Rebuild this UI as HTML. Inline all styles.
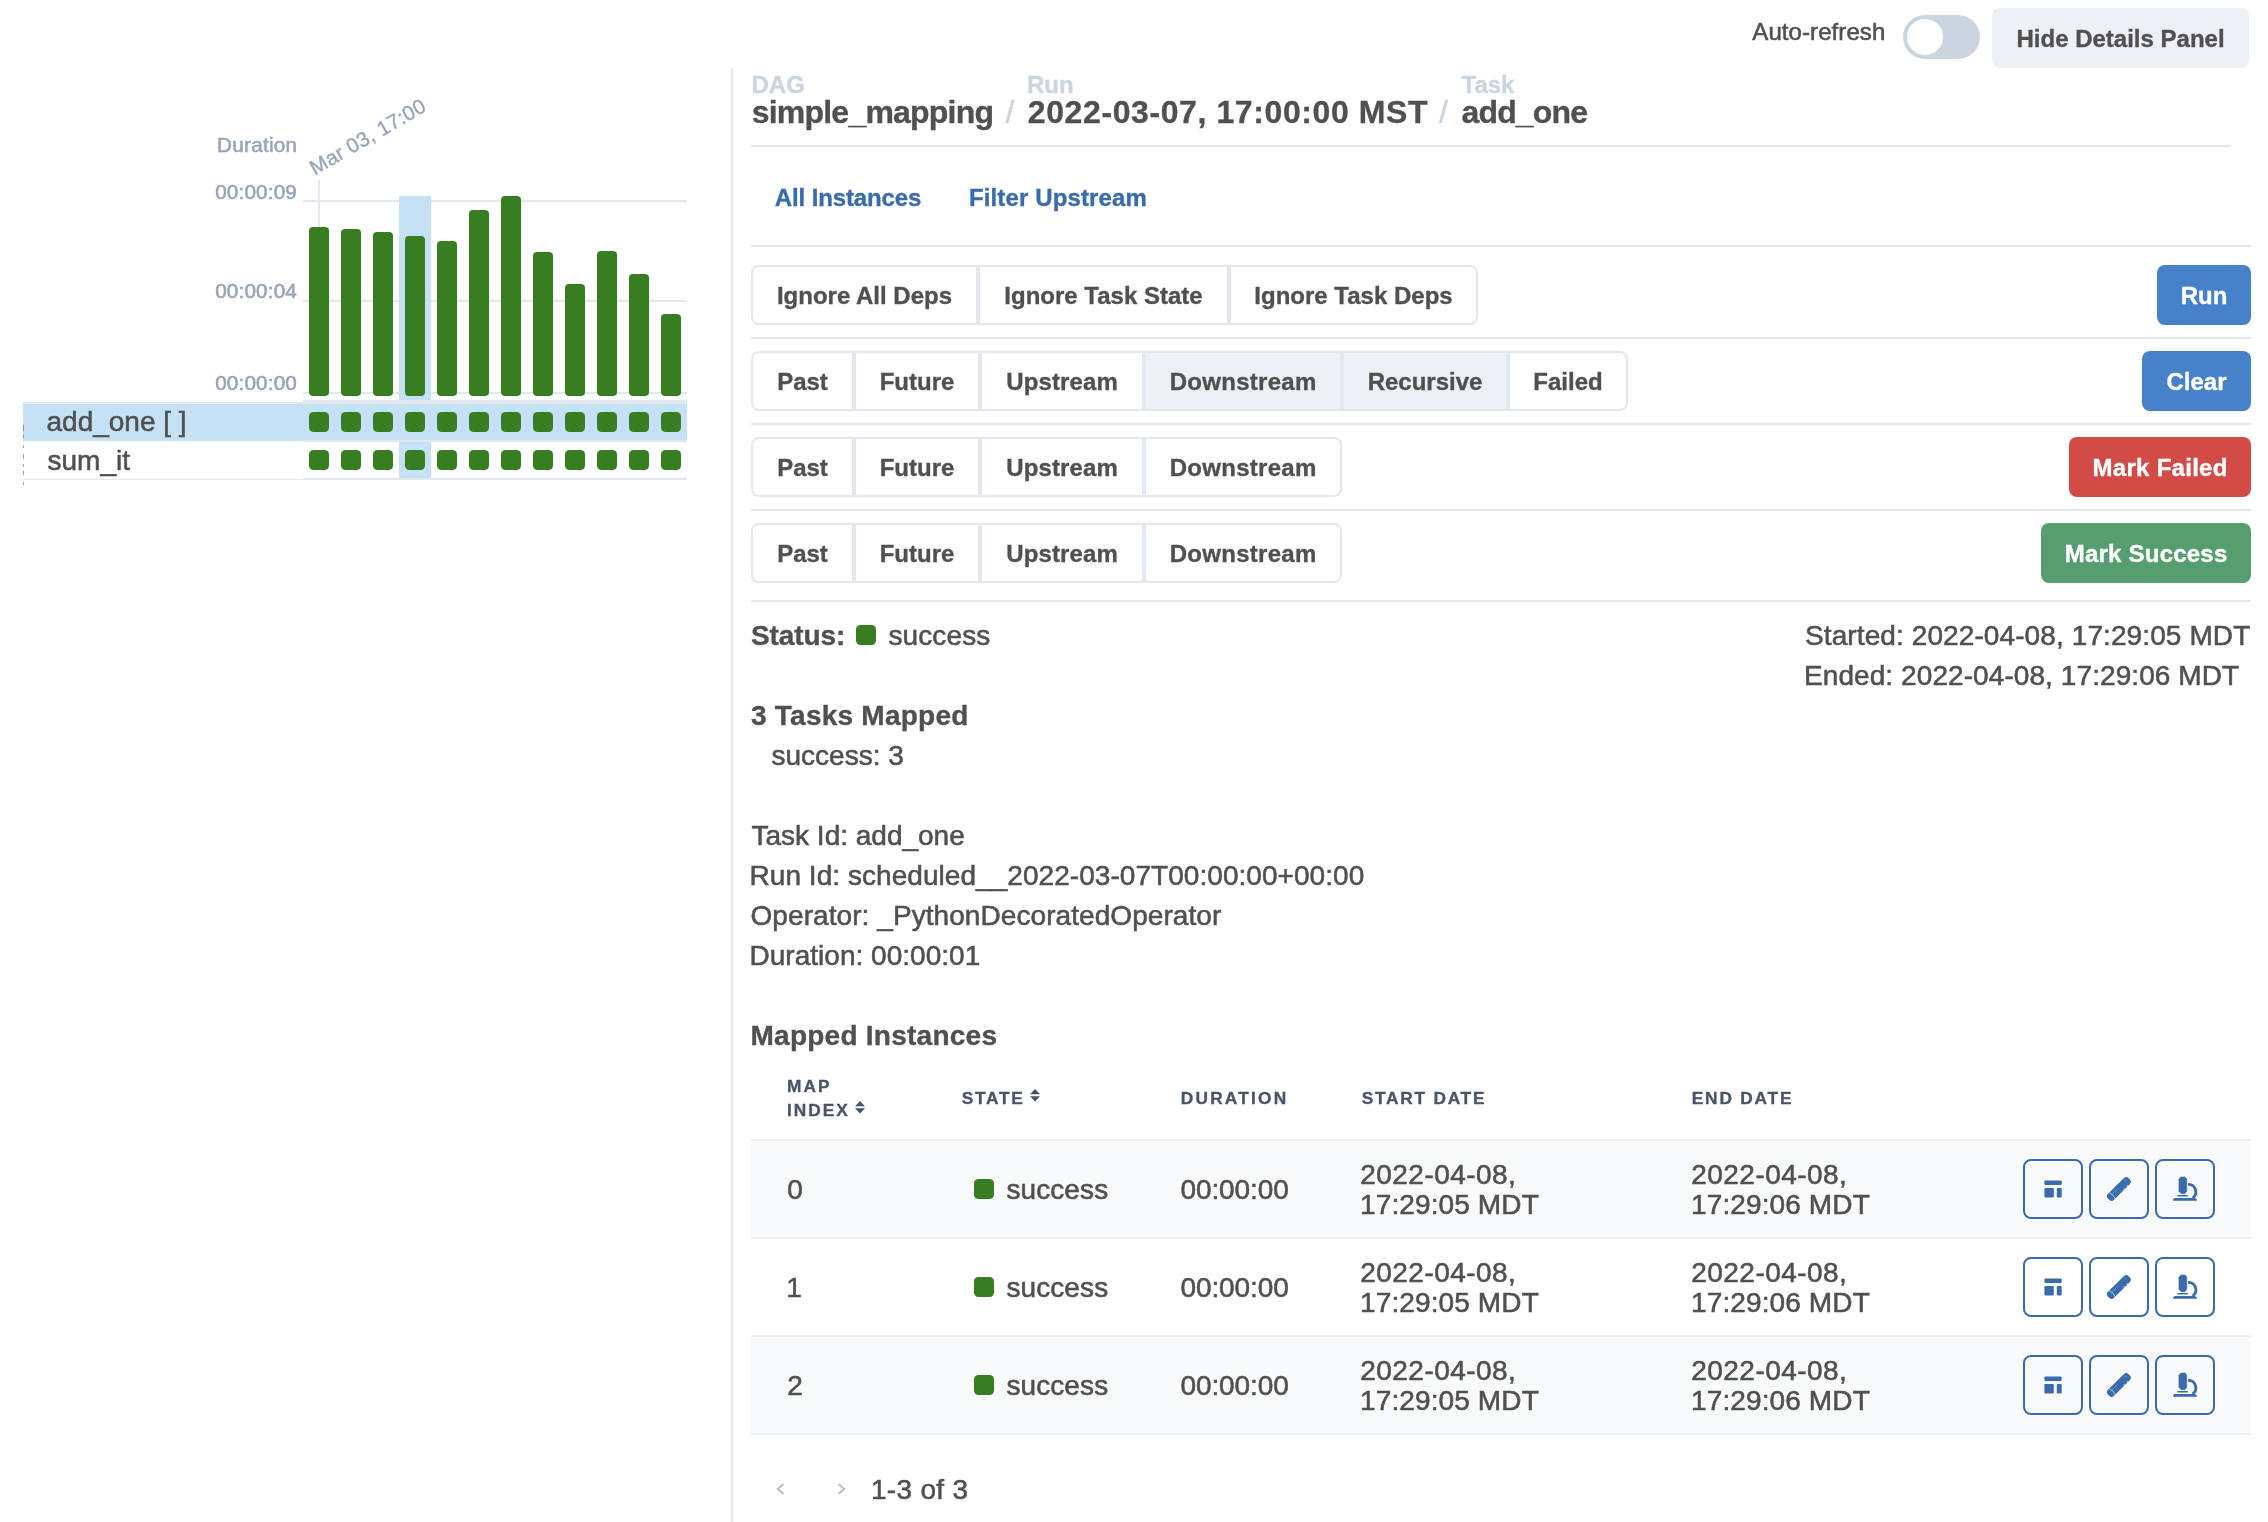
<!DOCTYPE html>
<html><head><meta charset="utf-8"><title>Airflow grid</title>
<style>
html,body{margin:0;padding:0;background:#fff}
body{width:2268px;height:1522px;position:relative;overflow:hidden;font-family:"Liberation Sans",sans-serif;color:#51504f}
#root{position:absolute;left:0;top:0;width:2268px;height:1522px;will-change:transform;transform:translateZ(0)}
.t{position:absolute;white-space:nowrap;-webkit-text-stroke:0.35px}
.r{position:absolute}
.b{color:#51504f}
</style></head><body><div id="root">
<div class="t" style="top:16px;font-size:24px;line-height:31px;color:#51504f;-webkit-text-stroke:0.55px;letter-spacing:0.08px;left:1752.3px;">Auto-refresh</div>
<div class="r" style="left:1903px;top:15px;width:77px;height:44px;background:#cbd5e0;border-radius:22px"></div>
<div class="r" style="left:1907px;top:19px;width:36px;height:36px;background:#fff;border-radius:50%"></div>
<div class="r" style="left:1992px;top:8px;width:257px;height:60px;background:#edf1f6;border-radius:8px"></div>
<div class="t" style="top:23px;font-size:24px;line-height:31px;color:#51504f;font-weight:700;left:2016.5px;">Hide Details Panel</div>
<div class="t" style="top:131px;font-size:20.7px;line-height:27px;color:#98a5b9;-webkit-text-stroke:0.55px;letter-spacing:0.25px;right:1970.7px;text-align:right;">Duration</div>
<div class="t" style="top:178px;font-size:20.7px;line-height:27px;color:#98a5b9;-webkit-text-stroke:0.55px;letter-spacing:0.16px;right:1971px;text-align:right;">00:00:09</div>
<div class="t" style="top:277px;font-size:20.7px;line-height:27px;color:#98a5b9;-webkit-text-stroke:0.55px;letter-spacing:0.16px;right:1971px;text-align:right;">00:00:04</div>
<div class="t" style="top:369px;font-size:20.7px;line-height:27px;color:#98a5b9;-webkit-text-stroke:0.55px;letter-spacing:0.16px;right:1971px;text-align:right;">00:00:00</div>
<div class="t" style="left:314.4px;top:173.7px;font-size:20.7px;letter-spacing:0.2px;line-height:0;color:#98a5b9;transform-origin:0 0;transform:rotate(-30deg)"><span style="position:absolute;left:0;bottom:0;line-height:1;transform:translateY(5.60px)">Mar 03, 17:00</span></div>
<div class="r" style="left:303px;top:200px;width:384px;height:2px;background:#e3e7ef;"></div>
<div class="r" style="left:303px;top:300px;width:384px;height:2px;background:#e3e7ef;"></div>
<div class="r" style="left:303px;top:392px;width:384px;height:2px;background:#e3e7ef;"></div>
<div class="r" style="left:318px;top:180px;width:2px;height:48px;background:#e3e7ef;"></div>
<div class="r" style="left:399px;top:196px;width:32px;height:204px;background:#c4e1f6;"></div>
<div class="r" style="left:399px;top:442px;width:32px;height:36px;background:#c4e1f6;"></div>
<div class="r" style="left:309px;top:227px;width:20px;height:169px;background:#377d22;border-radius:4px"></div>
<div class="r" style="left:341px;top:229px;width:20px;height:167px;background:#377d22;border-radius:4px"></div>
<div class="r" style="left:373px;top:232px;width:20px;height:164px;background:#377d22;border-radius:4px"></div>
<div class="r" style="left:405px;top:236px;width:20px;height:160px;background:#377d22;border-radius:4px"></div>
<div class="r" style="left:437px;top:241px;width:20px;height:155px;background:#377d22;border-radius:4px"></div>
<div class="r" style="left:469px;top:210px;width:20px;height:186px;background:#377d22;border-radius:4px"></div>
<div class="r" style="left:501px;top:196px;width:20px;height:200px;background:#377d22;border-radius:4px"></div>
<div class="r" style="left:533px;top:252px;width:20px;height:144px;background:#377d22;border-radius:4px"></div>
<div class="r" style="left:565px;top:284px;width:20px;height:112px;background:#377d22;border-radius:4px"></div>
<div class="r" style="left:597px;top:251px;width:20px;height:145px;background:#377d22;border-radius:4px"></div>
<div class="r" style="left:629px;top:274px;width:20px;height:122px;background:#377d22;border-radius:4px"></div>
<div class="r" style="left:661px;top:314px;width:20px;height:82px;background:#377d22;border-radius:4px"></div>
<div class="r" style="left:303px;top:400px;width:384px;height:4px;background:#e3e7ef;"></div>
<div class="r" style="left:23px;top:402px;width:280px;height:2px;background:#e3e7ef;"></div>
<div class="r" style="left:23px;top:404px;width:664px;height:36px;background:#c4e1f6;"></div>
<div class="r" style="left:23px;top:440px;width:280px;height:1px;background:#c4e1f6;"></div>
<div class="r" style="left:303px;top:440px;width:384px;height:2px;background:#e3e7ef;"></div>
<div class="r" style="left:303px;top:478px;width:384px;height:2px;background:#e3e7ef;"></div>
<div class="r" style="left:23px;top:479px;width:280px;height:1px;background:#e3e7ef;"></div>
<div class="r" style="left:399px;top:442px;width:32px;height:36px;background:#c4e1f6;"></div>
<div class="r" style="left:309px;top:412px;width:20px;height:20px;background:#377d22;border-radius:4.5px"></div>
<div class="r" style="left:309px;top:450px;width:20px;height:20px;background:#377d22;border-radius:4.5px"></div>
<div class="r" style="left:341px;top:412px;width:20px;height:20px;background:#377d22;border-radius:4.5px"></div>
<div class="r" style="left:341px;top:450px;width:20px;height:20px;background:#377d22;border-radius:4.5px"></div>
<div class="r" style="left:373px;top:412px;width:20px;height:20px;background:#377d22;border-radius:4.5px"></div>
<div class="r" style="left:373px;top:450px;width:20px;height:20px;background:#377d22;border-radius:4.5px"></div>
<div class="r" style="left:405px;top:412px;width:20px;height:20px;background:#377d22;border-radius:4.5px"></div>
<div class="r" style="left:405px;top:450px;width:20px;height:20px;background:#377d22;border-radius:4.5px"></div>
<div class="r" style="left:437px;top:412px;width:20px;height:20px;background:#377d22;border-radius:4.5px"></div>
<div class="r" style="left:437px;top:450px;width:20px;height:20px;background:#377d22;border-radius:4.5px"></div>
<div class="r" style="left:469px;top:412px;width:20px;height:20px;background:#377d22;border-radius:4.5px"></div>
<div class="r" style="left:469px;top:450px;width:20px;height:20px;background:#377d22;border-radius:4.5px"></div>
<div class="r" style="left:501px;top:412px;width:20px;height:20px;background:#377d22;border-radius:4.5px"></div>
<div class="r" style="left:501px;top:450px;width:20px;height:20px;background:#377d22;border-radius:4.5px"></div>
<div class="r" style="left:533px;top:412px;width:20px;height:20px;background:#377d22;border-radius:4.5px"></div>
<div class="r" style="left:533px;top:450px;width:20px;height:20px;background:#377d22;border-radius:4.5px"></div>
<div class="r" style="left:565px;top:412px;width:20px;height:20px;background:#377d22;border-radius:4.5px"></div>
<div class="r" style="left:565px;top:450px;width:20px;height:20px;background:#377d22;border-radius:4.5px"></div>
<div class="r" style="left:597px;top:412px;width:20px;height:20px;background:#377d22;border-radius:4.5px"></div>
<div class="r" style="left:597px;top:450px;width:20px;height:20px;background:#377d22;border-radius:4.5px"></div>
<div class="r" style="left:629px;top:412px;width:20px;height:20px;background:#377d22;border-radius:4.5px"></div>
<div class="r" style="left:629px;top:450px;width:20px;height:20px;background:#377d22;border-radius:4.5px"></div>
<div class="r" style="left:661px;top:412px;width:20px;height:20px;background:#377d22;border-radius:4.5px"></div>
<div class="r" style="left:661px;top:450px;width:20px;height:20px;background:#377d22;border-radius:4.5px"></div>
<div class="t" style="top:404px;font-size:28px;line-height:35px;color:#51504f;-webkit-text-stroke:0.55px;left:46.5px;">add_one [ ]</div>
<div class="t" style="top:443px;font-size:28px;line-height:35px;color:#51504f;-webkit-text-stroke:0.55px;left:47.5px;">sum_it</div>
<div class="r" style="left:23px;top:425px;width:1px;height:6px;background:rgba(90,90,90,.55);"></div>
<div class="r" style="left:23px;top:435px;width:1px;height:3px;background:rgba(90,90,90,.55);"></div>
<div class="r" style="left:23px;top:445px;width:1px;height:3px;background:rgba(90,90,90,.55);"></div>
<div class="r" style="left:23px;top:454px;width:1px;height:5px;background:rgba(90,90,90,.55);"></div>
<div class="r" style="left:23px;top:464px;width:1px;height:3px;background:rgba(90,90,90,.55);"></div>
<div class="r" style="left:23px;top:471px;width:1px;height:4px;background:rgba(90,90,90,.55);"></div>
<div class="r" style="left:23px;top:482px;width:1px;height:3px;background:rgba(90,90,90,.55);"></div>
<div class="r" style="left:731px;top:68px;width:2px;height:1454px;background:#e3e7ef;"></div>
<div class="t" style="top:69px;font-size:24px;line-height:31px;color:#cbd5e0;font-weight:700;left:751.5px;">DAG</div>
<div class="t" style="top:69px;font-size:24px;line-height:31px;color:#cbd5e0;font-weight:700;left:1027px;">Run</div>
<div class="t" style="top:69px;font-size:24px;line-height:31px;color:#cbd5e0;font-weight:700;left:1461.5px;">Task</div>
<div class="t" style="top:92px;font-size:32px;line-height:40px;color:#51504f;font-weight:700;letter-spacing:-0.78px;left:751.7px;">simple_mapping</div>
<div class="t" style="top:92px;font-size:32px;line-height:40px;color:#cbd5e0;-webkit-text-stroke:0.55px;left:1005.5px;">/</div>
<div class="t" style="top:92px;font-size:32px;line-height:40px;color:#51504f;font-weight:700;letter-spacing:0.6px;left:1027.8px;">2022-03-07, 17:00:00 MST</div>
<div class="t" style="top:92px;font-size:32px;line-height:40px;color:#cbd5e0;-webkit-text-stroke:0.55px;left:1439px;">/</div>
<div class="t" style="top:92px;font-size:32px;line-height:40px;color:#51504f;font-weight:700;letter-spacing:-0.85px;left:1461.5px;">add_one</div>
<div class="r" style="left:751px;top:145px;width:1480px;height:2px;background:#e3e7ef;"></div>
<div class="t" style="top:182px;font-size:24px;line-height:31px;color:#3a6bad;font-weight:700;letter-spacing:-0.12px;left:774.8px;">All Instances</div>
<div class="t" style="top:182px;font-size:24px;line-height:31px;color:#3a6bad;font-weight:700;letter-spacing:0.12px;left:969px;">Filter Upstream</div>
<div class="r" style="left:751px;top:245px;width:1500px;height:2px;background:#e3e7ef;"></div>
<div class="r" style="left:751px;top:337px;width:1500px;height:2px;background:#e3e7ef;"></div>
<div class="r" style="left:751px;top:423px;width:1500px;height:2px;background:#e3e7ef;"></div>
<div class="r" style="left:751px;top:509px;width:1500px;height:2px;background:#e3e7ef;"></div>
<div class="r" style="left:751px;top:600px;width:1500px;height:2px;background:#e3e7ef;"></div>
<div class="r" style="left:751px;top:265px;width:727px;height:60px;border:2px solid #e3e7ef;border-radius:8px;box-sizing:border-box;overflow:hidden">
<div class="r" style="left:223px;top:-2px;width:4px;height:60px;background:#e3e7ef"></div>
<div class="r" style="left:474px;top:-2px;width:4px;height:60px;background:#e3e7ef"></div>
</div>
<div class="t b" style="left:751px;width:227px;top:265px;height:60px;line-height:62px;text-align:center;font-size:24px;font-weight:700">Ignore All Deps</div>
<div class="t b" style="left:978px;width:251px;top:265px;height:60px;line-height:62px;text-align:center;font-size:24px;font-weight:700">Ignore Task State</div>
<div class="t b" style="left:1229px;width:249px;top:265px;height:60px;line-height:62px;text-align:center;font-size:24px;font-weight:700">Ignore Task Deps</div>
<div class="r" style="left:751px;top:351px;width:877px;height:60px;border:2px solid #e3e7ef;border-radius:8px;box-sizing:border-box;overflow:hidden">
<div class="r" style="left:99px;top:-2px;width:4px;height:60px;background:#e3e7ef"></div>
<div class="r" style="left:225px;top:-2px;width:4px;height:60px;background:#e3e7ef"></div>
<div class="r" style="left:391px;top:-2px;width:198px;height:60px;background:#edf1f6"></div>
<div class="r" style="left:389px;top:-2px;width:4px;height:60px;background:#e3e7ef"></div>
<div class="r" style="left:589px;top:-2px;width:166px;height:60px;background:#edf1f6"></div>
<div class="r" style="left:587px;top:-2px;width:4px;height:60px;background:#e3e7ef"></div>
<div class="r" style="left:753px;top:-2px;width:4px;height:60px;background:#e3e7ef"></div>
</div>
<div class="t b" style="left:751px;width:103px;top:351px;height:60px;line-height:62px;text-align:center;font-size:24px;font-weight:700">Past</div>
<div class="t b" style="left:854px;width:126px;top:351px;height:60px;line-height:62px;text-align:center;font-size:24px;font-weight:700">Future</div>
<div class="t b" style="left:980px;width:164px;top:351px;height:60px;line-height:62px;text-align:center;font-size:24px;font-weight:700"><span style="letter-spacing:0.12px;margin-right:-0.12px">Upstream</span></div>
<div class="t b" style="left:1144px;width:198px;top:351px;height:60px;line-height:62px;text-align:center;font-size:24px;font-weight:700"><span style="letter-spacing:0.3px;margin-right:-0.3px">Downstream</span></div>
<div class="t b" style="left:1342px;width:166px;top:351px;height:60px;line-height:62px;text-align:center;font-size:24px;font-weight:700">Recursive</div>
<div class="t b" style="left:1508px;width:120px;top:351px;height:60px;line-height:62px;text-align:center;font-size:24px;font-weight:700">Failed</div>
<div class="r" style="left:751px;top:437px;width:591px;height:60px;border:2px solid #e3e7ef;border-radius:8px;box-sizing:border-box;overflow:hidden">
<div class="r" style="left:99px;top:-2px;width:4px;height:60px;background:#e3e7ef"></div>
<div class="r" style="left:225px;top:-2px;width:4px;height:60px;background:#e3e7ef"></div>
<div class="r" style="left:389px;top:-2px;width:4px;height:60px;background:#e3e7ef"></div>
</div>
<div class="t b" style="left:751px;width:103px;top:437px;height:60px;line-height:62px;text-align:center;font-size:24px;font-weight:700">Past</div>
<div class="t b" style="left:854px;width:126px;top:437px;height:60px;line-height:62px;text-align:center;font-size:24px;font-weight:700">Future</div>
<div class="t b" style="left:980px;width:164px;top:437px;height:60px;line-height:62px;text-align:center;font-size:24px;font-weight:700"><span style="letter-spacing:0.12px;margin-right:-0.12px">Upstream</span></div>
<div class="t b" style="left:1144px;width:198px;top:437px;height:60px;line-height:62px;text-align:center;font-size:24px;font-weight:700"><span style="letter-spacing:0.3px;margin-right:-0.3px">Downstream</span></div>
<div class="r" style="left:751px;top:523px;width:591px;height:60px;border:2px solid #e3e7ef;border-radius:8px;box-sizing:border-box;overflow:hidden">
<div class="r" style="left:99px;top:-2px;width:4px;height:60px;background:#e3e7ef"></div>
<div class="r" style="left:225px;top:-2px;width:4px;height:60px;background:#e3e7ef"></div>
<div class="r" style="left:389px;top:-2px;width:4px;height:60px;background:#e3e7ef"></div>
</div>
<div class="t b" style="left:751px;width:103px;top:523px;height:60px;line-height:62px;text-align:center;font-size:24px;font-weight:700">Past</div>
<div class="t b" style="left:854px;width:126px;top:523px;height:60px;line-height:62px;text-align:center;font-size:24px;font-weight:700">Future</div>
<div class="t b" style="left:980px;width:164px;top:523px;height:60px;line-height:62px;text-align:center;font-size:24px;font-weight:700"><span style="letter-spacing:0.12px;margin-right:-0.12px">Upstream</span></div>
<div class="t b" style="left:1144px;width:198px;top:523px;height:60px;line-height:62px;text-align:center;font-size:24px;font-weight:700"><span style="letter-spacing:0.3px;margin-right:-0.3px">Downstream</span></div>
<div class="t" style="left:2157px;top:265px;width:94px;height:60px;line-height:62px;background:#4681c9;border-radius:8px;color:#fff;text-align:center;font-size:24px;font-weight:700">Run</div>
<div class="t" style="left:2142px;top:351px;width:109px;height:60px;line-height:62px;background:#4681c9;border-radius:8px;color:#fff;text-align:center;font-size:24px;font-weight:700">Clear</div>
<div class="t" style="left:2069px;top:437px;width:182px;height:60px;line-height:62px;background:#d24b47;border-radius:8px;color:#fff;text-align:center;font-size:24px;font-weight:700"><span style="letter-spacing:0.28px;margin-right:-0.28px">Mark Failed</span></div>
<div class="t" style="left:2041px;top:523px;width:210px;height:60px;line-height:62px;background:#579e6f;border-radius:8px;color:#fff;text-align:center;font-size:24px;font-weight:700"><span style="letter-spacing:0.22px;margin-right:-0.22px">Mark Success</span></div>
<div class="t" style="top:618px;font-size:28px;line-height:35px;color:#51504f;font-weight:700;letter-spacing:-0.1px;left:751px;">Status:</div>
<div class="r" style="left:856px;top:625px;width:20px;height:20px;background:#377d22;border-radius:4.5px"></div>
<div class="t" style="top:618px;font-size:28px;line-height:35px;color:#51504f;-webkit-text-stroke:0.55px;letter-spacing:0.1px;left:888.5px;">success</div>
<div class="t" style="top:618px;font-size:28px;line-height:35px;color:#51504f;-webkit-text-stroke:0.55px;letter-spacing:0.1px;left:1805px;">Started: 2022-04-08, 17:29:05 MDT</div>
<div class="t" style="top:658px;font-size:28px;line-height:35px;color:#51504f;-webkit-text-stroke:0.55px;letter-spacing:0.08px;left:1804px;">Ended: 2022-04-08, 17:29:06 MDT</div>
<div class="t" style="top:698px;font-size:28px;line-height:35px;color:#51504f;font-weight:700;letter-spacing:0.24px;left:751px;">3 Tasks Mapped</div>
<div class="t" style="top:738px;font-size:28px;line-height:35px;color:#51504f;-webkit-text-stroke:0.55px;left:771.5px;">success: 3</div>
<div class="t" style="top:818px;font-size:28px;line-height:35px;color:#51504f;-webkit-text-stroke:0.55px;left:751.5px;">Task Id: add_one</div>
<div class="t" style="top:858px;font-size:28px;line-height:35px;color:#51504f;-webkit-text-stroke:0.55px;letter-spacing:0.05px;left:749.5px;">Run Id: scheduled__2022-03-07T00:00:00+00:00</div>
<div class="t" style="top:898px;font-size:28px;line-height:35px;color:#51504f;-webkit-text-stroke:0.55px;letter-spacing:0.07px;left:750.5px;">Operator: _PythonDecoratedOperator</div>
<div class="t" style="top:938px;font-size:28px;line-height:35px;color:#51504f;-webkit-text-stroke:0.55px;letter-spacing:0.02px;left:749.5px;">Duration: 00:00:01</div>
<div class="t" style="top:1018px;font-size:28px;line-height:35px;color:#51504f;font-weight:700;letter-spacing:0.25px;left:750.5px;">Mapped Instances</div>
<div class="t" style="top:1074px;font-size:17.3px;line-height:24px;color:#4a5568;font-weight:700;letter-spacing:2.0px;left:787px;">MAP</div>
<div class="t" style="top:1098px;font-size:17.3px;line-height:24px;color:#4a5568;font-weight:700;letter-spacing:2.0px;left:787px;">INDEX</div>
<div class="t" style="top:1086px;font-size:17.3px;line-height:24px;color:#4a5568;font-weight:700;letter-spacing:1.7px;left:961.8px;">STATE</div>
<div class="t" style="top:1086px;font-size:17.3px;line-height:24px;color:#4a5568;font-weight:700;letter-spacing:2.2px;left:1180.8px;">DURATION</div>
<div class="t" style="top:1086px;font-size:17.3px;line-height:24px;color:#4a5568;font-weight:700;letter-spacing:1.75px;left:1361.8px;">START DATE</div>
<div class="t" style="top:1086px;font-size:17.3px;line-height:24px;color:#4a5568;font-weight:700;letter-spacing:1.8px;left:1691.8px;">END DATE</div>
<svg class="r" style="left:855px;top:1100.6px" width="10" height="13" viewBox="0 0 10 13"><path d="M5 0L10 5.3H0zM0 7.3H10L5 12.6z" fill="#4a5568"/></svg>
<svg class="r" style="left:1030px;top:1088.7px" width="10" height="13" viewBox="0 0 10 13"><path d="M5 0L10 5.3H0zM0 7.3H10L5 12.6z" fill="#4a5568"/></svg>
<div class="r" style="left:751px;top:1139px;width:1500px;height:2px;background:#edf1f6;"></div>
<div class="r" style="left:751px;top:1141px;width:1500px;height:96px;background:#f8fafc;"></div>
<div class="t" style="top:1172px;font-size:28px;line-height:35px;color:#51504f;-webkit-text-stroke:0.55px;left:787.3px;">0</div>
<div class="r" style="left:974px;top:1179px;width:20px;height:20px;background:#377d22;border-radius:4.5px"></div>
<div class="t" style="top:1172px;font-size:28px;line-height:35px;color:#51504f;-webkit-text-stroke:0.55px;letter-spacing:0.1px;left:1006.4px;">success</div>
<div class="t" style="top:1172px;font-size:28px;line-height:35px;color:#51504f;-webkit-text-stroke:0.55px;letter-spacing:-0.1px;left:1180.5px;">00:00:00</div>
<div class="t" style="top:1157px;font-size:28px;line-height:35px;color:#51504f;-webkit-text-stroke:0.55px;letter-spacing:0.45px;left:1360.3px;">2022-04-08,</div>
<div class="t" style="top:1187px;font-size:28px;line-height:35px;color:#51504f;-webkit-text-stroke:0.55px;letter-spacing:0.12px;left:1360px;">17:29:05 MDT</div>
<div class="t" style="top:1157px;font-size:28px;line-height:35px;color:#51504f;-webkit-text-stroke:0.55px;letter-spacing:0.45px;left:1691.3px;">2022-04-08,</div>
<div class="t" style="top:1187px;font-size:28px;line-height:35px;color:#51504f;-webkit-text-stroke:0.55px;letter-spacing:0.12px;left:1691px;">17:29:06 MDT</div>
<div class="r" style="left:2023px;top:1159px;width:60px;height:60px;box-sizing:border-box;border:2px solid #3a6bad;border-radius:8px"><svg style="position:absolute;left:-2px;top:-2px" width="60" height="60" viewBox="0 0 60 60"><rect x="21.4" y="21.6" width="17.3" height="4.3" rx="1.2" fill="#3a6bad"/><rect x="21.4" y="29" width="9.4" height="9.5" rx="1.2" fill="#3a6bad"/><rect x="33.8" y="29" width="4.9" height="9.5" rx="1.2" fill="#3a6bad"/></svg></div>
<div class="r" style="left:2089px;top:1159px;width:60px;height:60px;box-sizing:border-box;border:2px solid #3a6bad;border-radius:8px"><svg style="position:absolute;left:-2px;top:-2px" width="60" height="60" viewBox="0 0 60 60"><g transform="translate(29.95 29.95) rotate(-45)"><rect x="-14.6" y="-4.25" width="29" height="8.5" rx="3.4" fill="#3a6bad"/><path d="M-9.6 -4.2q1.6 4.2 0 8.4" stroke="#fff" stroke-opacity=".5" stroke-width="1" fill="none"/><path d="M-9 -1.2h8.5" stroke="#fff" stroke-opacity=".35" stroke-width=".7" fill="none"/><path d="M10.6 -3.6v3.4" stroke="#fff" stroke-opacity=".3" stroke-width=".8" fill="none"/><path d="M2.5 4.3l1.2 -1.2l1.2 1.2z M7 4.3l1 -1.4l1.2 1.4z" fill="#f8f9fc" fill-opacity=".85"/></g></svg></div>
<div class="r" style="left:2155px;top:1159px;width:60px;height:60px;box-sizing:border-box;border:2px solid #3a6bad;border-radius:8px"><svg style="position:absolute;left:-2px;top:-2px" width="60" height="60" viewBox="0 0 60 60"><path d="M25.8 18L30.2 18L31.8 20.2L31.8 32.2L29.9 34.7L26.1 34.7L23.9 32.2L23.9 20.2Z" fill="#3a6bad" stroke="#3a6bad" stroke-width=".5" stroke-linejoin="round"/><path d="M33.1 25.4A7.4 7.4 0 0 1 37.6 38.9" stroke="#3a6bad" stroke-width="2.8" fill="none"/><rect x="22.2" y="36" width="10.7" height="1.55" rx=".5" fill="#3a6bad"/><path d="M19.5 39L40 39L41.9 40.5L41.9 41.8L18.1 41.8L18.1 40.4Z" fill="#3a6bad"/></svg></div>
<div class="r" style="left:751px;top:1237px;width:1500px;height:2px;background:#edf1f6;"></div>
<div class="t" style="top:1270px;font-size:28px;line-height:35px;color:#51504f;-webkit-text-stroke:0.55px;left:786.3px;">1</div>
<div class="r" style="left:974px;top:1277px;width:20px;height:20px;background:#377d22;border-radius:4.5px"></div>
<div class="t" style="top:1270px;font-size:28px;line-height:35px;color:#51504f;-webkit-text-stroke:0.55px;letter-spacing:0.1px;left:1006.4px;">success</div>
<div class="t" style="top:1270px;font-size:28px;line-height:35px;color:#51504f;-webkit-text-stroke:0.55px;letter-spacing:-0.1px;left:1180.5px;">00:00:00</div>
<div class="t" style="top:1255px;font-size:28px;line-height:35px;color:#51504f;-webkit-text-stroke:0.55px;letter-spacing:0.45px;left:1360.3px;">2022-04-08,</div>
<div class="t" style="top:1285px;font-size:28px;line-height:35px;color:#51504f;-webkit-text-stroke:0.55px;letter-spacing:0.12px;left:1360px;">17:29:05 MDT</div>
<div class="t" style="top:1255px;font-size:28px;line-height:35px;color:#51504f;-webkit-text-stroke:0.55px;letter-spacing:0.45px;left:1691.3px;">2022-04-08,</div>
<div class="t" style="top:1285px;font-size:28px;line-height:35px;color:#51504f;-webkit-text-stroke:0.55px;letter-spacing:0.12px;left:1691px;">17:29:06 MDT</div>
<div class="r" style="left:2023px;top:1257px;width:60px;height:60px;box-sizing:border-box;border:2px solid #3a6bad;border-radius:8px"><svg style="position:absolute;left:-2px;top:-2px" width="60" height="60" viewBox="0 0 60 60"><rect x="21.4" y="21.6" width="17.3" height="4.3" rx="1.2" fill="#3a6bad"/><rect x="21.4" y="29" width="9.4" height="9.5" rx="1.2" fill="#3a6bad"/><rect x="33.8" y="29" width="4.9" height="9.5" rx="1.2" fill="#3a6bad"/></svg></div>
<div class="r" style="left:2089px;top:1257px;width:60px;height:60px;box-sizing:border-box;border:2px solid #3a6bad;border-radius:8px"><svg style="position:absolute;left:-2px;top:-2px" width="60" height="60" viewBox="0 0 60 60"><g transform="translate(29.95 29.95) rotate(-45)"><rect x="-14.6" y="-4.25" width="29" height="8.5" rx="3.4" fill="#3a6bad"/><path d="M-9.6 -4.2q1.6 4.2 0 8.4" stroke="#fff" stroke-opacity=".5" stroke-width="1" fill="none"/><path d="M-9 -1.2h8.5" stroke="#fff" stroke-opacity=".35" stroke-width=".7" fill="none"/><path d="M10.6 -3.6v3.4" stroke="#fff" stroke-opacity=".3" stroke-width=".8" fill="none"/><path d="M2.5 4.3l1.2 -1.2l1.2 1.2z M7 4.3l1 -1.4l1.2 1.4z" fill="#f8f9fc" fill-opacity=".85"/></g></svg></div>
<div class="r" style="left:2155px;top:1257px;width:60px;height:60px;box-sizing:border-box;border:2px solid #3a6bad;border-radius:8px"><svg style="position:absolute;left:-2px;top:-2px" width="60" height="60" viewBox="0 0 60 60"><path d="M25.8 18L30.2 18L31.8 20.2L31.8 32.2L29.9 34.7L26.1 34.7L23.9 32.2L23.9 20.2Z" fill="#3a6bad" stroke="#3a6bad" stroke-width=".5" stroke-linejoin="round"/><path d="M33.1 25.4A7.4 7.4 0 0 1 37.6 38.9" stroke="#3a6bad" stroke-width="2.8" fill="none"/><rect x="22.2" y="36" width="10.7" height="1.55" rx=".5" fill="#3a6bad"/><path d="M19.5 39L40 39L41.9 40.5L41.9 41.8L18.1 41.8L18.1 40.4Z" fill="#3a6bad"/></svg></div>
<div class="r" style="left:751px;top:1335px;width:1500px;height:2px;background:#edf1f6;"></div>
<div class="r" style="left:751px;top:1337px;width:1500px;height:96px;background:#f8fafc;"></div>
<div class="t" style="top:1368px;font-size:28px;line-height:35px;color:#51504f;-webkit-text-stroke:0.55px;left:787.3px;">2</div>
<div class="r" style="left:974px;top:1375px;width:20px;height:20px;background:#377d22;border-radius:4.5px"></div>
<div class="t" style="top:1368px;font-size:28px;line-height:35px;color:#51504f;-webkit-text-stroke:0.55px;letter-spacing:0.1px;left:1006.4px;">success</div>
<div class="t" style="top:1368px;font-size:28px;line-height:35px;color:#51504f;-webkit-text-stroke:0.55px;letter-spacing:-0.1px;left:1180.5px;">00:00:00</div>
<div class="t" style="top:1353px;font-size:28px;line-height:35px;color:#51504f;-webkit-text-stroke:0.55px;letter-spacing:0.45px;left:1360.3px;">2022-04-08,</div>
<div class="t" style="top:1383px;font-size:28px;line-height:35px;color:#51504f;-webkit-text-stroke:0.55px;letter-spacing:0.12px;left:1360px;">17:29:05 MDT</div>
<div class="t" style="top:1353px;font-size:28px;line-height:35px;color:#51504f;-webkit-text-stroke:0.55px;letter-spacing:0.45px;left:1691.3px;">2022-04-08,</div>
<div class="t" style="top:1383px;font-size:28px;line-height:35px;color:#51504f;-webkit-text-stroke:0.55px;letter-spacing:0.12px;left:1691px;">17:29:06 MDT</div>
<div class="r" style="left:2023px;top:1355px;width:60px;height:60px;box-sizing:border-box;border:2px solid #3a6bad;border-radius:8px"><svg style="position:absolute;left:-2px;top:-2px" width="60" height="60" viewBox="0 0 60 60"><rect x="21.4" y="21.6" width="17.3" height="4.3" rx="1.2" fill="#3a6bad"/><rect x="21.4" y="29" width="9.4" height="9.5" rx="1.2" fill="#3a6bad"/><rect x="33.8" y="29" width="4.9" height="9.5" rx="1.2" fill="#3a6bad"/></svg></div>
<div class="r" style="left:2089px;top:1355px;width:60px;height:60px;box-sizing:border-box;border:2px solid #3a6bad;border-radius:8px"><svg style="position:absolute;left:-2px;top:-2px" width="60" height="60" viewBox="0 0 60 60"><g transform="translate(29.95 29.95) rotate(-45)"><rect x="-14.6" y="-4.25" width="29" height="8.5" rx="3.4" fill="#3a6bad"/><path d="M-9.6 -4.2q1.6 4.2 0 8.4" stroke="#fff" stroke-opacity=".5" stroke-width="1" fill="none"/><path d="M-9 -1.2h8.5" stroke="#fff" stroke-opacity=".35" stroke-width=".7" fill="none"/><path d="M10.6 -3.6v3.4" stroke="#fff" stroke-opacity=".3" stroke-width=".8" fill="none"/><path d="M2.5 4.3l1.2 -1.2l1.2 1.2z M7 4.3l1 -1.4l1.2 1.4z" fill="#f8f9fc" fill-opacity=".85"/></g></svg></div>
<div class="r" style="left:2155px;top:1355px;width:60px;height:60px;box-sizing:border-box;border:2px solid #3a6bad;border-radius:8px"><svg style="position:absolute;left:-2px;top:-2px" width="60" height="60" viewBox="0 0 60 60"><path d="M25.8 18L30.2 18L31.8 20.2L31.8 32.2L29.9 34.7L26.1 34.7L23.9 32.2L23.9 20.2Z" fill="#3a6bad" stroke="#3a6bad" stroke-width=".5" stroke-linejoin="round"/><path d="M33.1 25.4A7.4 7.4 0 0 1 37.6 38.9" stroke="#3a6bad" stroke-width="2.8" fill="none"/><rect x="22.2" y="36" width="10.7" height="1.55" rx=".5" fill="#3a6bad"/><path d="M19.5 39L40 39L41.9 40.5L41.9 41.8L18.1 41.8L18.1 40.4Z" fill="#3a6bad"/></svg></div>
<div class="r" style="left:751px;top:1433px;width:1500px;height:2px;background:#edf1f6;"></div>
<svg class="r" style="left:774px;top:1481px" width="14" height="16" viewBox="0 0 14 16"><path d="M9.6 3L3.8 8l5.8 5" stroke="#bdbdbd" stroke-width="1.9" fill="none"/></svg>
<svg class="r" style="left:834px;top:1481px" width="14" height="16" viewBox="0 0 14 16"><path d="M4.4 3l5.8 5-5.8 5" stroke="#bdbdbd" stroke-width="1.9" fill="none"/></svg>
<div class="t" style="top:1472px;font-size:28px;line-height:35px;color:#51504f;-webkit-text-stroke:0.55px;letter-spacing:0.3px;left:871px;">1-3 of 3</div>
</div></body></html>
